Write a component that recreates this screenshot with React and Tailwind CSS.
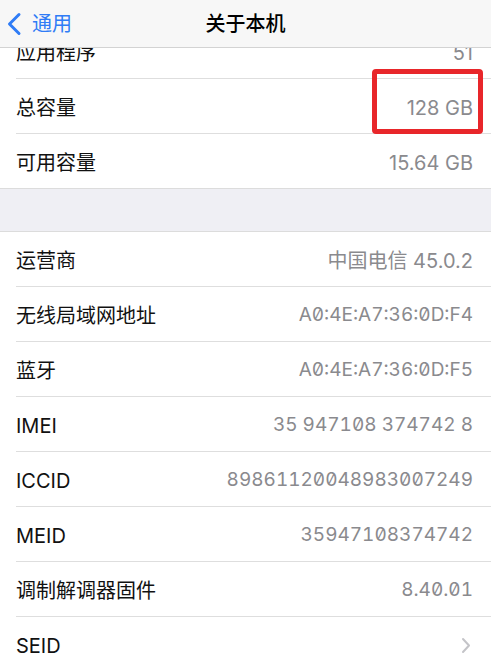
const cjk = { fontFamily: 'Inter, "Noto Sans CJK SC", sans-serif' };

function Row({ label, value, mono, chevron, last }) {
  return (
    <div>
      <div className="h-[54px] flex items-center justify-between pl-4 pr-[18px] pt-[3px]">
        <span className="text-[20px] text-[#111]">{label}</span>
        {chevron ? (
          <svg width="10" height="17" viewBox="0 0 10 17" className="mr-[2px]">
            <path d="M2 2 L8 8.5 L2 15" fill="none" stroke="#c4c4c8" strokeWidth="2" strokeLinecap="round" strokeLinejoin="round" />
          </svg>
        ) : (
          <span className={"text-[#8a8a8e] " + (mono ? "text-[19px] tabular-nums slashed-zero" : "text-[20px]")}>{value}</span>
        )}
      </div>
      {!last && <div className="ml-4 h-px bg-[#dedede]" />}
    </div>
  );
}

export default function App() {
  const top = [
    { label: "应用程序", value: "51" },
    { label: "总容量", value: "128 GB" },
    { label: "可用容量", value: "15.64 GB", last: true },
  ];
  const info = [
    { label: "运营商", value: "中国电信 45.0.2" },
    { label: "无线局域网地址", value: "A0:4E:A7:36:0D:F4", mono: true },
    { label: "蓝牙", value: "A0:4E:A7:36:0D:F5", mono: true },
    { label: "IMEI", value: "35 947108 374742 8", mono: true },
    { label: "ICCID", value: "89861120048983007249", mono: true },
    { label: "MEID", value: "35947108374742", mono: true },
    { label: "调制解调器固件", value: "8.40.01", mono: true },
    { label: "SEID", chevron: true, last: true },
  ];

  return (
    <div className="relative w-[491px] h-[660px] overflow-hidden bg-white" style={cjk}>
      <div className="pt-[24px]">
        {top.map((r) => (
          <Row key={r.label} {...r} />
        ))}
        <div className="h-[44px] bg-[#efeff4] border-y border-[#dcdcdc]" />
        {info.map((r) => (
          <Row key={r.label} {...r} />
        ))}
      </div>

      {/* red highlight box */}
      <div className="absolute left-[372px] top-[69px] w-[111px] h-[65px] border-[5px] border-[#e8262a] rounded-[4px]" />

      {/* nav bar */}
      <div className="absolute top-0 left-0 w-full h-[48px] bg-[#f7f7f7] border-b border-[#d3d3d3] flex items-center">
        <div className="flex items-center pl-[6px] gap-[10px] text-[#2f7cf6]">
          <svg width="16" height="24" viewBox="0 0 16 24">
            <path d="M13 2.5 L3.5 12 L13 21.5" fill="none" stroke="#2f7cf6" strokeWidth="3" strokeLinecap="round" strokeLinejoin="round" />
          </svg>
          <span className="text-[20px]">通用</span>
        </div>
        <div className="absolute inset-x-0 top-0 h-full flex items-center justify-center pointer-events-none">
          <span className="text-[20px] font-medium text-black">关于本机</span>
        </div>
      </div>
    </div>
  );
}
